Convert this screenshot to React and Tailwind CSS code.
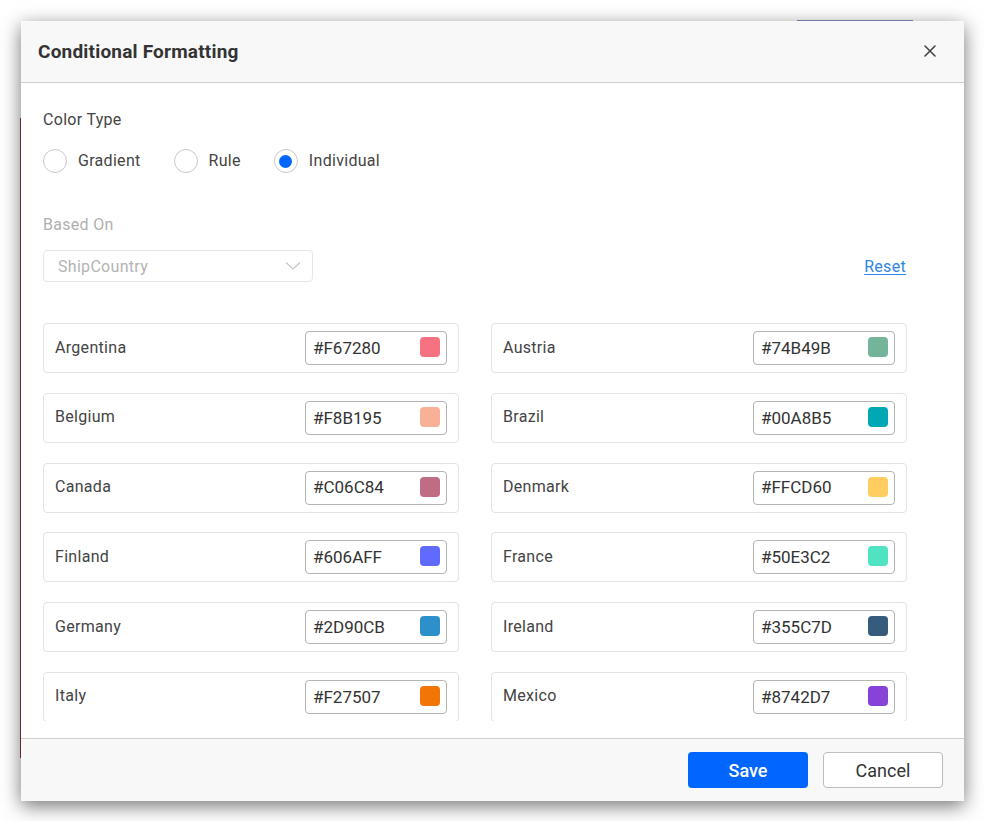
import { useState } from 'react';

const COUNTRIES = [
  ['Argentina', '#F67280'],
  ['Austria', '#74B49B'],
  ['Belgium', '#F8B195'],
  ['Brazil', '#00A8B5'],
  ['Canada', '#C06C84'],
  ['Denmark', '#FFCD60'],
  ['Finland', '#606AFF'],
  ['France', '#50E3C2'],
  ['Germany', '#2D90CB'],
  ['Ireland', '#355C7D'],
  ['Italy', '#F27507'],
  ['Mexico', '#8742D7'],
];

const FONT = { fontFamily: 'Roboto, "Noto Sans", sans-serif' };

function Radio({ label, checked, onSelect }) {
  return (
    <label className="flex items-center cursor-pointer" onClick={onSelect}>
      <span className="w-[24px] h-[24px] rounded-full border border-[#c8c8c8] bg-white flex items-center justify-center">
        {checked && <span className="w-[13px] h-[13px] rounded-full bg-[#0066ff]" />}
      </span>
      <span className="ml-[11px] text-[16px] tracking-[0.3px] text-[#444]">{label}</span>
    </label>
  );
}

function ColorCard({ name, color }) {
  return (
    <div className="h-[50px] border border-[#e3e3e3] rounded-[4px] flex items-center justify-between pl-[11px] pr-[11px]">
      <span className="text-[16px] tracking-[0.3px] text-[#444] -mt-px">{name}</span>
      <div className="w-[142px] h-[34px] border border-[#b4b4b4] rounded-[4px] flex items-center justify-between pl-[7px] pr-[6px]">
        <span className="text-[17px] text-[#333] mt-px">{color}</span>
        <span className="w-[20px] h-[20px] rounded-[4px] -mt-[2px]" style={{ backgroundColor: color }} />
      </div>
    </div>
  );
}

export default function App() {
  const [type, setType] = useState('Individual');

  return (
    <div className="relative w-[984px] h-[821px] bg-white overflow-hidden" style={FONT}>
      {/* page behind the dialog */}
      <div className="absolute left-[20px] top-[118px] w-px h-[640px] bg-[#8a3c3c]" />
      <div className="absolute left-[797px] top-[20px] w-[116px] h-px bg-[#8090c0]" />

      <div className="absolute left-[21px] top-[21px] w-[943px] h-[780px] bg-white flex flex-col shadow-[0_5px_18px_rgba(0,0,0,0.55)]">
        {/* header */}
        <div className="h-[62px] shrink-0 bg-[#f8f8f8] border-b border-[#cfcfcf] flex items-center justify-between pl-[17px] pr-[27px]">
          <h2 className="text-[19px] font-bold text-[#333] tracking-[0.2px] mt-[2px]">Conditional Formatting</h2>
          <svg width="14" height="14" viewBox="0 0 14 14" className="mt-[-1px]">
            <path d="M2 2 L12 12 M12 2 L2 12" stroke="#444" strokeWidth="1.6" strokeLinecap="round" />
          </svg>
        </div>

        {/* body */}
        <div className="flex-1 flex flex-col pt-[27px] pl-[22px] pr-[57px]">
          <div className="h-[20px] leading-[20px] text-[16px] tracking-[0.3px] text-[#444]">Color Type</div>
          <div className="mt-[19px] h-[24px] flex items-center gap-[33px]">
            {['Gradient', 'Rule', 'Individual'].map((t) => (
              <Radio key={t} label={t} checked={type === t} onSelect={() => setType(t)} />
            ))}
          </div>

          <div className="mt-[42px] h-[20px] leading-[20px] text-[16px] tracking-[0.3px] text-[#b0b0b0]">Based On</div>
          <div className="mt-[15px] flex items-center justify-between">
            <div className="w-[270px] h-[32px] border border-[#e6e6e6] rounded-[4px] flex items-center justify-between pl-[14px] pr-[11px]">
              <span className="text-[16px] tracking-[0.3px] text-[#b4b4b4] mt-px">ShipCountry</span>
              <svg width="16" height="10" viewBox="0 0 16 10">
                <path d="M1 1.5 L8 8 L15 1.5" fill="none" stroke="#c4c4c4" strokeWidth="1.2" />
              </svg>
            </div>
            <a href="#" className="text-[16px] tracking-[0.3px] text-[#2f86e6] underline underline-offset-2 mr-px mt-px">Reset</a>
          </div>

          <div className="mt-[41px] h-[398px] overflow-hidden">
            <div className="grid grid-cols-2 gap-x-[32px] gap-y-[19.75px]">
              {COUNTRIES.map(([n, c]) => (
                <ColorCard key={n} name={n} color={c} />
              ))}
            </div>
          </div>
        </div>

        {/* footer */}
        <div className="h-[63px] shrink-0 bg-[#f8f8f8] border-t border-[#cfcfcf] flex items-center justify-end gap-[15px] pr-[21px]">
          <button className="w-[120px] h-[36px] rounded-[4px] bg-[#0066ff] text-white text-[18px] font-medium">Save</button>
          <button className="w-[120px] h-[36px] rounded-[4px] bg-white border border-[#bdbdbd] text-[#333] text-[18px]">Cancel</button>
        </div>
      </div>
    </div>
  );
}
